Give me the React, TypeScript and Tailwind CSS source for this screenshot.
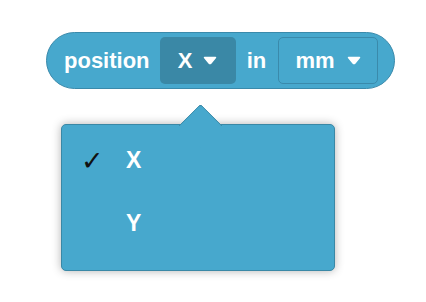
import React from "react";

function Caret() {
  return (
    <svg width="14" height="9" viewBox="0 0 14 9" className="block">
      <path d="M1.5 1.5 H12.5 L7.8 7.2 Q7 8 6.2 7.2 Z" fill="white" stroke="white" strokeWidth="1.5" strokeLinejoin="round" />
    </svg>
  );
}

export default function App() {
  return (
    <div
      className="relative w-[426px] h-[302px] bg-white overflow-hidden"
      style={{ fontFamily: '"Liberation Sans", Arial, sans-serif' }}
    >
      <div className="pt-[32px] pl-[46px]">
        <div className="inline-flex items-center h-[57px] w-[349px] rounded-full bg-[#47a8cd] border border-[#3a8aab] pl-[17px] pr-[16px] text-white font-bold text-[22px]">
          <span>position</span>
          <div className="ml-[10px] flex items-center justify-center gap-[11px] h-[47px] w-[77px] rounded-[5px] bg-[#3a88a6]">
            <span>X</span>
            <Caret />
          </div>
          <span className="ml-[11px]">in</span>
          <div className="ml-[12px] flex items-center justify-center gap-[12px] h-[47px] w-[101px] rounded-[5px] border border-[#3a8aab]">
            <span>mm</span>
            <Caret />
          </div>
        </div>
      </div>

      <div className="absolute left-[61px] top-[124px] w-[274px] h-[147px]">
        <div className="absolute inset-0 rounded-[5px] bg-[#47a8cd] border border-[#3a88a6] shadow-[0_0_10px_rgba(0,0,0,0.3)]" />
        <div className="absolute left-[124px] top-[-14px] w-[31px] h-[31px] rotate-45 rounded-tl-[4px] bg-[#47a8cd] border-t border-l border-[#3a88a6]" />
        <div className="relative flex flex-col pt-[20px] text-white font-bold text-[23px]">
          <div className="flex items-center h-[32px]">
            <span
              className="w-[65px] pl-[20px] text-[#111] text-[27px] leading-none font-bold italic"
              style={{ fontFamily: '"DejaVu Sans", sans-serif' }}
            >
              ✓
            </span>
            <span>X</span>
          </div>
          <div className="flex items-center h-[32px] mt-[31px]">
            <span className="w-[65px]" />
            <span>Y</span>
          </div>
        </div>
      </div>
    </div>
  );
}
